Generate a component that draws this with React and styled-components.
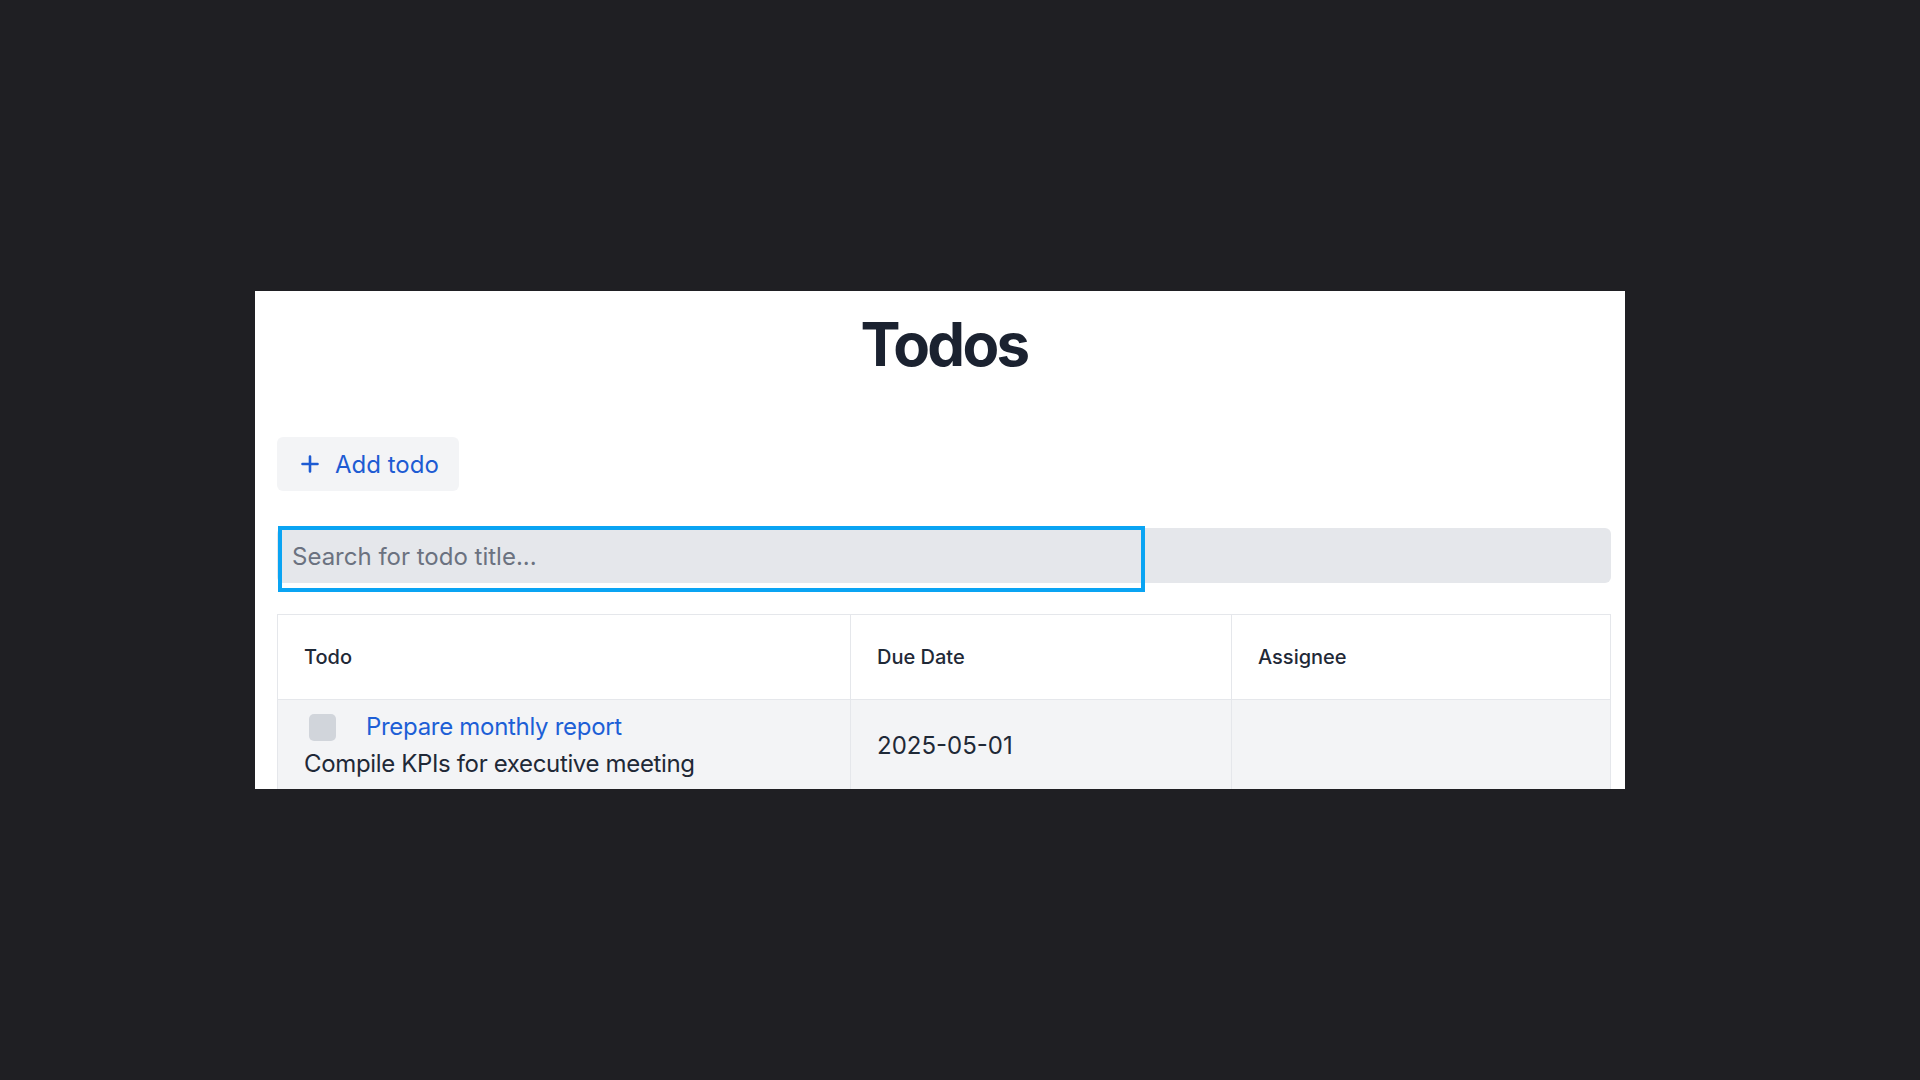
import styled, { createGlobalStyle } from 'styled-components';

const GlobalStyle = createGlobalStyle`
  html, body {
    margin: 0;
    padding: 0;
    background: #1f1f23;
  }
  body {
    font-family: 'Inter', 'Liberation Sans', sans-serif;
  }
`;

const PlusIcon = () => (
  <svg width="18" height="18" viewBox="0 0 18 18" fill="none">
    <path d="M9 1.5v15M1.5 9h15" stroke="currentColor" strokeWidth="2.6" strokeLinecap="round" />
  </svg>
);

export default function App() {
  return (
    <>
      <GlobalStyle />
      <Page>
        <Panel>
          <Title>Todos</Title>
          <AddButton type="button">
            <PlusIcon />
            <span>Add todo</span>
          </AddButton>
          <SearchRow>
            <SearchInput placeholder={'Search for todo title...'} />
          </SearchRow>
          <Table>
            <colgroup>
              <col style={{ width: '573px' }} />
              <col style={{ width: '381px' }} />
              <col />
            </colgroup>
            <thead>
              <tr>
                <HeadCell>Todo</HeadCell>
                <HeadCell>Due Date</HeadCell>
                <HeadCell>Assignee</HeadCell>
              </tr>
            </thead>
            <tbody>
              <BodyRow>
                <Cell>
                  <TodoLine>
                    <Check type="checkbox" />
                    <TodoLink href="#">Prepare monthly report</TodoLink>
                  </TodoLine>
                  <Description>Compile KPIs for executive meeting</Description>
                </Cell>
                <Cell>2025-05-01</Cell>
                <Cell />
              </BodyRow>
            </tbody>
          </Table>
        </Panel>
      </Page>
    </>
  );
}

const Page = styled.div`
  padding: 291px 0 0 255px;
`;

const Panel = styled.div`
  width: 1370px;
  height: 498px;
  box-sizing: border-box;
  padding: 0 14px 0 22px;
  background: #ffffff;
  overflow: hidden;
  display: flex;
  flex-direction: column;
  align-items: flex-start;

  & > * {
    flex-shrink: 0;
  }
`;

const Title = styled.h1`
  align-self: stretch;
  margin: 17px 0 0;
  text-align: center;
  font-size: 60px;
  line-height: 72px;
  font-weight: 700;
  letter-spacing: -2.7px;
  color: #1b2230;
`;

const AddButton = styled.button`
  margin-top: 57px;
  height: 54px;
  padding: 0 20px 0 24px;
  display: flex;
  align-items: center;
  gap: 16px;
  border: none;
  border-radius: 6px;
  background: #f3f4f6;
  color: #1d5bd3;
  font-family: inherit;
  font-size: 24px;
  font-weight: 400;
  cursor: pointer;
`;

const SearchRow = styled.div`
  align-self: stretch;
  margin-top: 37px;
  height: 55px;
  border-radius: 6px;
  background: #e5e7eb;
  display: flex;
  align-items: flex-start;
`;

const SearchInput = styled.input`
  flex: 0 0 859px;
  height: 58px;
  margin: 2px 0 0 5px;
  box-sizing: border-box;
  padding: 0 10px 5px;
  border: none;
  background: transparent;
  outline: 4px solid #0aa4f3;
  font-family: inherit;
  font-size: 24px;
  color: #1f2937;

  &::placeholder {
    color: #6b7280;
  }
`;

const Table = styled.table`
  align-self: stretch;
  margin-top: 31px;
  border-collapse: collapse;
  table-layout: fixed;
  border: 1px solid #e5e7eb;
`;

const HeadCell = styled.th`
  height: 84px;
  padding: 0 26px;
  text-align: left;
  font-size: 20px;
  font-weight: 500;
  color: #1f2937;
  background: #ffffff;
  border: 1px solid #e5e7eb;
`;

const BodyRow = styled.tr`
  background: #f3f4f6;
`;

const Cell = styled.td`
  padding: 12px 26px;
  vertical-align: middle;
  font-size: 24px;
  line-height: 32px;
  color: #1f2937;
  border: 1px solid #e5e7eb;
`;

const TodoLine = styled.div`
  display: flex;
  align-items: center;
  gap: 30px;
  height: 30px;
  margin-bottom: 6px;
`;

const Check = styled.input`
  appearance: none;
  width: 27px;
  height: 27px;
  margin: 0 0 0 5px;
  border-radius: 5px;
  background: #d1d5db;
`;

const TodoLink = styled.a`
  color: #1d5fd6;
  text-decoration: none;
  letter-spacing: -0.3px;
`;

const Description = styled.div`
  color: #1f2937;
  letter-spacing: -0.35px;
`;
